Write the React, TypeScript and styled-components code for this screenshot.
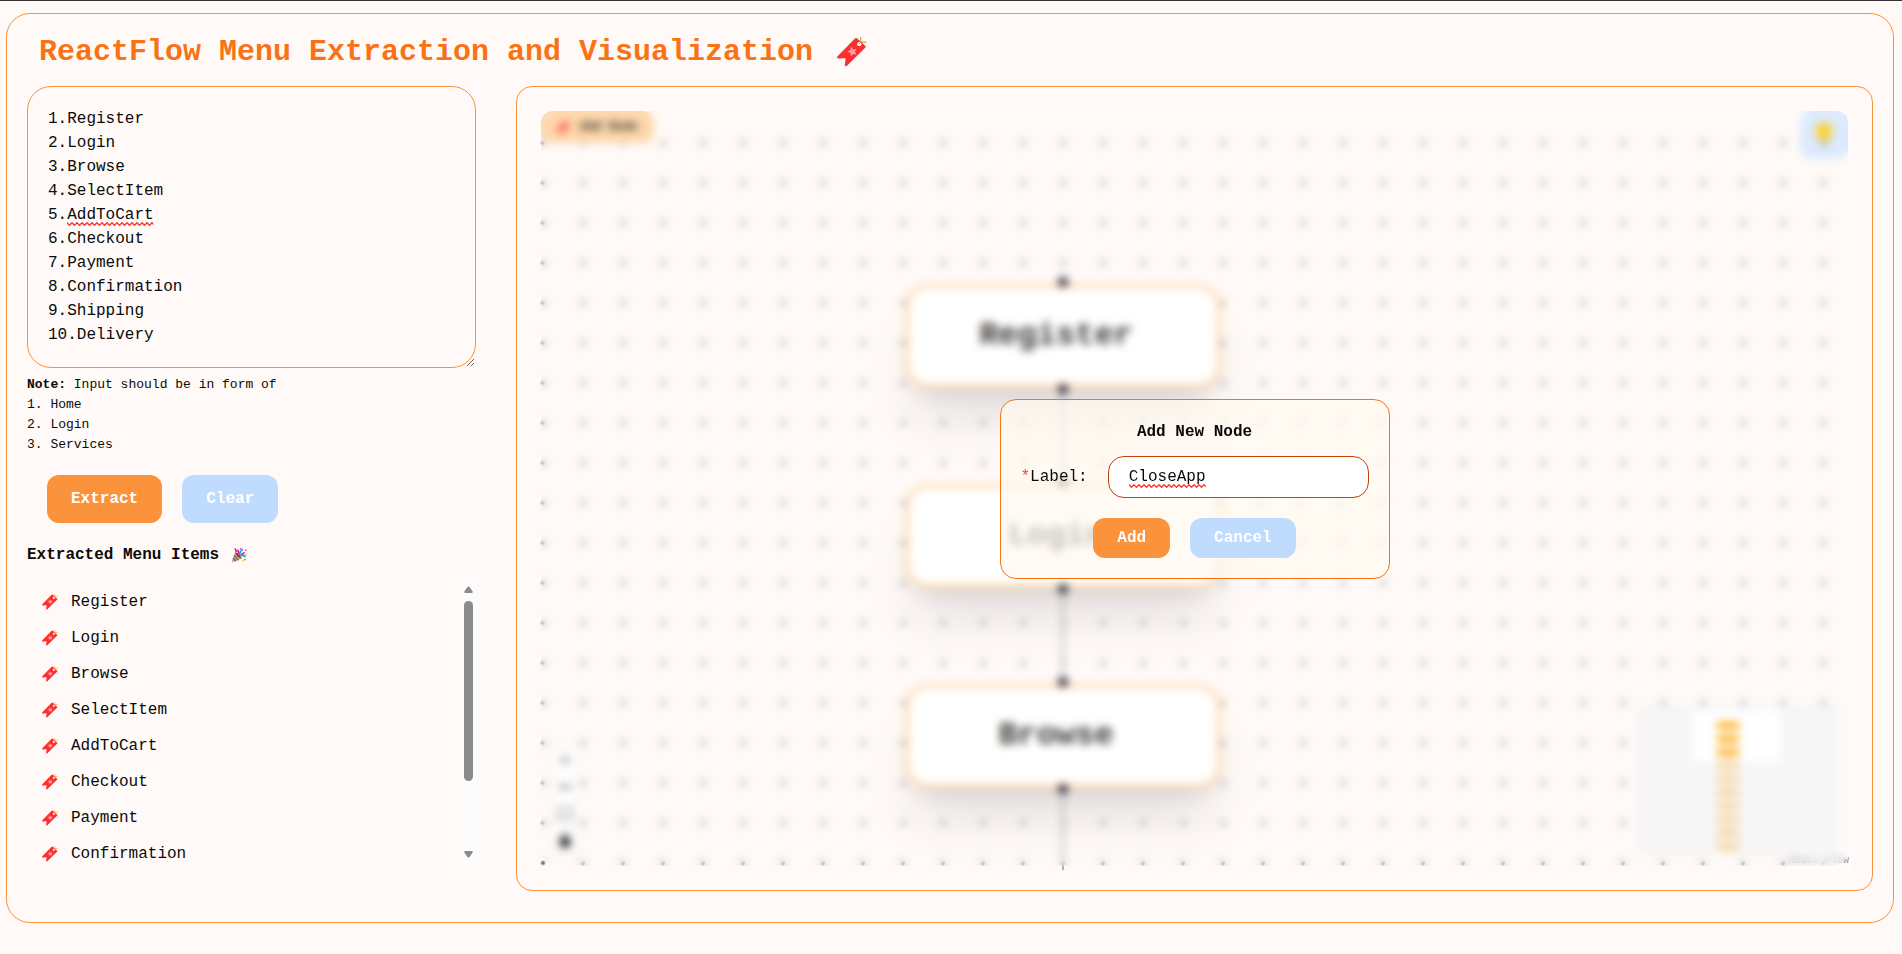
import React, { useState } from "react";
import styled, { createGlobalStyle } from "styled-components";

const GlobalStyle = createGlobalStyle`
  *, *::before, *::after { box-sizing: border-box; }
  body {
    margin: 0;
    background: #fffaf7;
    color: #0a0a0a;
    font-family: "Liberation Mono", monospace;
    font-size: 16px;
    line-height: 24px;
  }
  button, input, textarea { font: inherit; color: inherit; }
  h1, h2, p, ul, ol { margin: 0; padding: 0; }
  ul, ol { list-style: none; }
`;

const Page = styled.div`
  min-height: 100vh;
  border-top: 1px solid #37323a;
  padding: 12px 8px 12px 6px;
`;

const Shell = styled.main`
  border: 1px solid #fb923c;
  border-radius: 24px;
  padding: 20px 20px 31px;
`;

const TitleRow = styled.header`
  display: flex;
  align-items: center;
  gap: 24px;
  padding-left: 12px;
  margin-bottom: 16px;
`;

const Title = styled.h1`
  font-size: 30px;
  line-height: 36px;
  font-weight: 700;
  color: #f97316;
`;

const Columns = styled.div`
  display: flex;
  gap: 40px;
  align-items: flex-start;
`;

const Sidebar = styled.section`
  flex: 0 0 449px;
  display: flex;
  flex-direction: column;
`;

const Field = styled.div`
  position: relative;
  display: flex;
  flex: 1;
  min-width: 0;
`;

const MenuText = styled.textarea`
  flex: 1;
  height: 282px;
  padding: 20px;
  border: 1px solid #fb923c;
  border-radius: 24px;
  background: transparent;
  outline: none;
  resize: both;
  overflow: hidden;
`;

const Wave = styled.svg<{ $line: number; $col: number; $chars: number; $pad: number }>`
  position: absolute;
  left: calc(21px + ${(p) => p.$col}ch);
  top: calc(${(p) => p.$pad}px + ${(p) => p.$line} * 24px + 19px);
  width: ${(p) => p.$chars}ch;
  height: 4px;
  pointer-events: none;
`;

const Note = styled.div`
  margin-top: 7px;
  font-size: 13px;
  line-height: 20px;
`;

const ButtonRow = styled.div<{ $center?: boolean }>`
  display: flex;
  gap: 20px;
  justify-content: ${(p) => (p.$center ? "center" : "flex-start")};
  margin: ${(p) => (p.$center ? "20px 0 0" : "20px")};
`;

const Button = styled.button<{ $tone: "primary" | "soft"; $tall?: boolean }>`
  height: ${(p) => (p.$tall ? 48 : 40)}px;
  padding: 0 24px;
  border: 0;
  border-radius: 12px;
  background: ${(p) => (p.$tone === "primary" ? "#fb923c" : "#bfdbfe")};
  color: #fff;
  font-weight: 700;
  cursor: pointer;
`;

const ListHeading = styled.h2`
  display: flex;
  align-items: center;
  gap: 12px;
  font-size: 16px;
  line-height: 24px;
  font-weight: 700;
`;

const ListBox = styled.div`
  display: flex;
  height: 288px;
  margin-top: 11px;
`;

const MenuList = styled.ul`
  flex: 1;
  padding: 12px 15px 0;
  overflow-y: auto;
  scrollbar-width: none;
`;

const MenuItem = styled.li`
  display: flex;
  align-items: center;
  gap: 13px;
  margin-bottom: 12px;
`;

const ScrollTrack = styled.div`
  width: 15px;
  padding: 8px 3px;
  display: flex;
  flex-direction: column;
  background: #fcfcfc;
`;

const ScrollThumb = styled.div`
  width: 9px;
  height: 180px;
  margin: 8px 0 auto;
  border-radius: 5px;
  background: #8b8b8b;
`;

const Panel = styled.section`
  flex: 1;
  min-width: 0;
  padding: 20px;
  border: 1px solid #fb923c;
  border-radius: 16px;
`;

const Flow = styled.div`
  position: relative;
  height: 80vh;
  overflow: hidden;
  background-image: radial-gradient(circle at center, #777782 0 1px, transparent 3px);
  background-size: 40px 40px;
  background-position: -14px 16px;
`;

const Edges = styled.svg`
  position: absolute;
  inset: 0;
  width: 100%;
  height: 100%;
`;

const Node = styled.div<{ $x: number; $y: number }>`
  position: absolute;
  left: ${(p) => p.$x}px;
  top: ${(p) => p.$y}px;
  width: 316px;
  height: 104px;
  padding-right: 14px;
  display: flex;
  align-items: center;
  justify-content: center;
  border: 4px solid #fed7aa;
  border-radius: 24px;
  background: #fff;
  box-shadow: 0 40px 50px -10px rgba(0, 0, 0, 0.1), 0 16px 20px -12px rgba(0, 0, 0, 0.1);
  color: #3c3c3c;
  font-size: 32px;
  font-weight: 700;

  &::before, &::after {
    content: "";
    position: absolute;
    left: calc(50% - 5px);
    width: 10px;
    height: 10px;
    border-radius: 50%;
    background: #2b2a3b;
  }
  &::before { top: -11px; }
  &::after { bottom: -10px; }
`;

const AddNode = styled.button`
  position: absolute;
  left: 4px;
  top: 4px;
  display: flex;
  align-items: center;
  gap: 10px;
  height: 32px;
  padding: 0 16px;
  border: 0;
  border-radius: 12px;
  background: #fed7aa;
  color: #333;
  font-size: 12px;
  font-weight: 700;
`;

const Hint = styled.button`
  position: absolute;
  right: 4px;
  top: 4px;
  display: grid;
  place-items: center;
  width: 48px;
  height: 48px;
  padding: 0;
  border: 0;
  border-radius: 12px;
  background: #dbeafe;
`;

const Controls = styled.div`
  position: absolute;
  left: 15px;
  bottom: 15px;
  display: flex;
  flex-direction: column;
  gap: 1px;
  padding-bottom: 1px;
  background: #eee;
  box-shadow: 0 0 2px 1px rgba(0, 0, 0, 0.08);
`;

const Control = styled.button`
  display: grid;
  place-items: center;
  width: 26px;
  height: 26px;
  padding: 0;
  border: 0;
  background: #fefefe;

  &:disabled { color: #888; }
`;

const MiniMap = styled.svg`
  position: absolute;
  right: 15px;
  bottom: 15px;
  width: 200px;
  height: 150px;
  background: #fff;
`;

const Attribution = styled.a`
  position: absolute;
  right: 0;
  bottom: 0;
  padding: 2px 3px;
  background: rgba(255, 255, 255, 0.5);
  color: #999;
  font-size: 10px;
  line-height: 14px;
  text-decoration: none;
`;

const Overlay = styled.div`
  position: absolute;
  inset: 4px;
  display: grid;
  place-items: center;
  border-radius: 16px;
  backdrop-filter: blur(4px);
`;

const Dialog = styled.form`
  width: 390px;
  padding: 20px;
  border: 1px solid #f97316;
  border-radius: 16px;
  background: rgba(255, 250, 240, 0.7);
`;

const DialogTitle = styled.h2`
  font-size: 16px;
  line-height: 24px;
  font-weight: 700;
  text-align: center;
`;

const LabelRow = styled.div`
  display: flex;
  align-items: center;
  gap: 20px;
  margin-top: 12px;
`;

const Star = styled.span`
  color: #ef4444;
`;

const LabelInput = styled.input`
  flex: 1;
  min-width: 0;
  height: 42px;
  padding: 0 20px;
  border: 1px solid #c2410c;
  border-radius: 16px;
  background: #fff;
  outline: none;
`;

const items = [
  "Register", "Login", "Browse", "SelectItem", "AddToCart",
  "Checkout", "Payment", "Confirmation", "Shipping", "Delivery",
];

const rowsInView = 8;

function Bookmark({ size }: { size: number }) {
  return (
    <svg width={size} height={size} viewBox="0 0 30 30" aria-hidden="true">
      <path
        d="M18 1.500 Q19.200 .5 20.300 1.500 L28.200 8.700 Q29.200 9.700 28.200 10.700 L10 28.700 Q8.200 30 7.800 28.200 L8.600 21.300 L1 21.400 Q-.8 20.800 .6 19.200 Z"
        fill="#fc2f2f"
      />
      <path d="M14.200 9.700l2 2.700 3.300-.7-1.600 3 1.800 2.800-3.400-.5-2.300 2.300-.6-3.300-3-1.500 3-1.500z" fill="#fd9aa6" />
      <circle cx="22.300" cy="7.200" r="2.100" fill="#fffaf7" />
      <path d="M23.600 0 L24 5.200 H29.700 M24 5.200 L22.300 7" fill="none" stroke="#c58a2c" strokeWidth="1" />
    </svg>
  );
}

function PartyPopper() {
  return (
    <svg width="16" height="16" viewBox="0 0 18 18" aria-hidden="true">
      <path d="M4.500 6 L12 13.200 L2 17 Q.7 17.300 1 16 Z" fill="#e8a33d" />
      <path d="M3.300 9.500l5 5.500M2.200 12.500l3.300 3.500" stroke="#4f5bd5" strokeWidth="1.400" />
      <path d="M4.500 6 Q9 6 12 13.200 Q6.500 12 4.500 6z" fill="#6b4a3c" />
      <path d="M8 9 Q9.500 5 7 3.200 M6 5.500 L5 2.500" fill="none" stroke="#e6168c" strokeWidth="1.800" />
      <path d="M9.500 9 Q10 4 13.500 2.500 M10.500 10.500 Q13 7.500 16.500 11" fill="none" stroke="#0aa5ee" strokeWidth="2" />
      <path d="M11 8.500 L15.500 6" stroke="#e6168c" strokeWidth="1.500" />
      <path d="M4 1.500h1.600v1.600H4zM10 1h1.500v1.500H10zM15.800 2.800h1.500v1.500h-1.500zM15 13.500h1.500V15H15z" fill="#e6168c" />
      <path d="M16 7.500h1.500V9H16zM12.500 14.500H14V16h-1.500z" fill="#f5b82e" />
    </svg>
  );
}

function Bulb() {
  return (
    <svg width="24" height="28" viewBox="0 0 24 28" aria-hidden="true">
      <path d="M12 1 a9 9 0 0 1 9 9 c0 4-3.500 6-4.500 10 h-9 C6.500 16 3 14 3 10 a9 9 0 0 1 9-9z" fill="#fbd33a" />
      <path d="M9 19h6v4l-2 3h-2l-2-3z" fill="#b5b0a4" />
    </svg>
  );
}

function SpellWave(props: { id: string; line: number; col: number; chars: number; pad: number }) {
  return (
    <Wave $line={props.line} $col={props.col} $chars={props.chars} $pad={props.pad} aria-hidden="true">
      <defs>
        <pattern id={props.id} width="5" height="4" patternUnits="userSpaceOnUse">
          <path d="M-1 .2 L0 .8 L2.500 3.200 L5 .8 L6 .2" fill="none" stroke="#f33" strokeWidth="1.500" />
        </pattern>
      </defs>
      <rect width="100%" height="4" fill={`url(#${props.id})`} />
    </Wave>
  );
}

export default function App() {
  const [text, setText] = useState(items.map((item, i) => `${i + 1}.${item}`).join("\n"));
  const [label, setLabel] = useState("CloseApp");

  return (
    <Page>
      <GlobalStyle />
      <Shell>
        <TitleRow>
          <Title>ReactFlow Menu Extraction and Visualization</Title>
          <Bookmark size={30} />
        </TitleRow>
        <Columns>
          <Sidebar>
            <Field>
              <MenuText aria-label="Menu items" value={text} onChange={(e) => setText(e.target.value)} />
              <SpellWave id="wave-menu" line={4} col={2} chars={9} pad={21} />
            </Field>
            <Note>
              <p><strong>Note:</strong> Input should be in form of</p>
              <ol>
                <li>1. Home</li>
                <li>2. Login</li>
                <li>3. Services</li>
              </ol>
            </Note>
            <ButtonRow>
              <Button type="button" $tone="primary" $tall>Extract</Button>
              <Button type="button" $tone="soft" $tall>Clear</Button>
            </ButtonRow>
            <ListHeading>
              Extracted Menu Items
              <PartyPopper />
            </ListHeading>
            <ListBox>
              <MenuList>
                {items.slice(0, rowsInView).map((item) => (
                  <MenuItem key={item}>
                    <Bookmark size={16} />
                    {item}
                  </MenuItem>
                ))}
              </MenuList>
              <ScrollTrack aria-hidden="true">
                <svg width="9" height="7"><path d="M3.500 1 Q4.500-.5 5.500 1 L8.700 5.500 Q9 7 7.500 7 H1.500 Q0 7 .3 5.500Z" fill="#8b8b8b" /></svg>
                <ScrollThumb />
                <svg width="9" height="7"><path d="M3.500 6 Q4.500 7.500 5.500 6 L8.700 1.500 Q9 0 7.500 0 H1.500 Q0 0 .3 1.500Z" fill="#8b8b8b" /></svg>
              </ScrollTrack>
            </ListBox>
          </Sidebar>

          <Panel>
            <Flow>
              <Edges aria-hidden="true">
                <path d="M526 280V380M526 480V580M526 680V780" stroke="#b1b1b7" strokeWidth="2" />
              </Edges>
              {items.slice(0, 3).map((item, i) => (
                <Node key={item} $x={368} $y={177 + i * 200}>{item}</Node>
              ))}
              <AddNode type="button"><Bookmark size={13} />Add Node</AddNode>
              <Hint type="button" aria-label="Show tips"><Bulb /></Hint>
              <Controls>
                <Control type="button" aria-label="Zoom in" disabled>
                  <svg width="12" height="12"><path d="M6 1v10M1 6h10" stroke="currentColor" strokeWidth="2" /></svg>
                </Control>
                <Control type="button" aria-label="Zoom out">
                  <svg width="12" height="12"><path d="M0 6h12" stroke="#333" strokeWidth="2" /></svg>
                </Control>
                <Control type="button" aria-label="Fit view">
                  <svg width="14" height="12"><path d="M1 4V1h4M9 1h4v3M13 8v3H9M5 11H1V8" fill="none" stroke="#333" strokeWidth="1.500" /></svg>
                </Control>
                <Control type="button" aria-label="Toggle lock">
                  <svg width="12" height="14"><path d="M3 6V4a3 3 0 0 1 6 0v2" fill="none" stroke="#111" strokeWidth="2" /><rect x="1" y="5" width="10" height="8" rx="1" fill="#111" /></svg>
                </Control>
              </Controls>
              <MiniMap viewBox="0 0 200 150" role="img" aria-label="Mini map">
                {items.map((item, i) => (
                  <rect key={item} x="80" y={17 + i * 13.45} width="22" height="7" rx="1" fill="#ffab1a" />
                ))}
                <path d="M0 0H200V150H0Z M56 5V57H144V5Z" fill="#f0f0f0" fillOpacity="0.600" />
              </MiniMap>
              <Attribution href="#">React Flow</Attribution>
              <Overlay>
                <Dialog onSubmit={(e) => e.preventDefault()}>
                  <DialogTitle>Add New Node</DialogTitle>
                  <LabelRow>
                    <label htmlFor="node-label"><Star>*</Star>Label:</label>
                    <Field>
                      <LabelInput id="node-label" value={label} onChange={(e) => setLabel(e.target.value)} />
                      <SpellWave id="wave-label" line={0} col={0} chars={8} pad={9} />
                    </Field>
                  </LabelRow>
                  <ButtonRow $center>
                    <Button type="submit" $tone="primary">Add</Button>
                    <Button type="button" $tone="soft">Cancel</Button>
                  </ButtonRow>
                </Dialog>
              </Overlay>
            </Flow>
          </Panel>
        </Columns>
      </Shell>
    </Page>
  );
}
